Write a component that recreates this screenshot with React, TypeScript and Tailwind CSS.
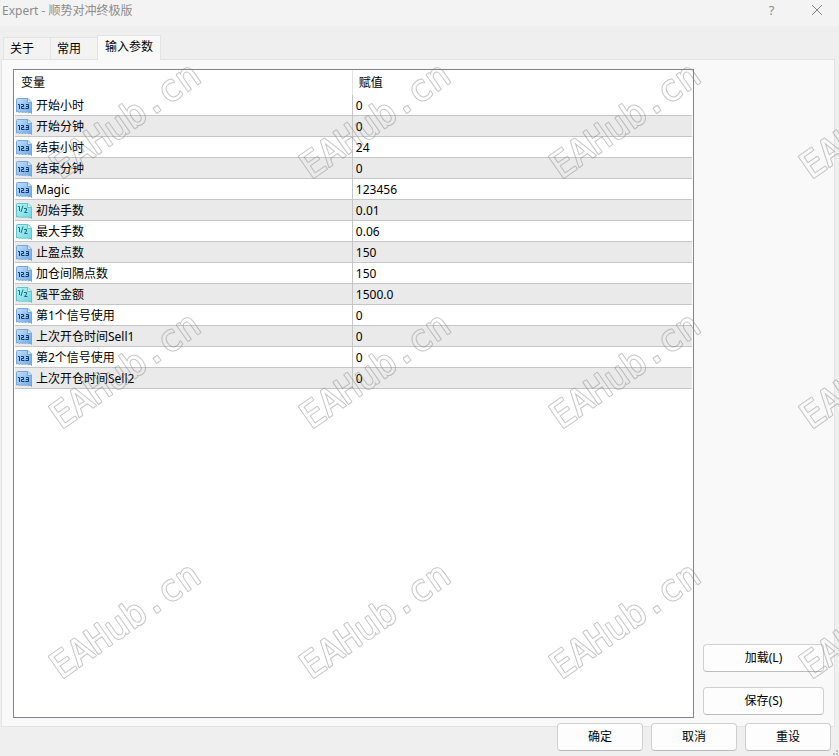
import { useState } from "react";
import clsx from "clsx";

type ParamKind = "int" | "double";

type Param = {
  name: string;
  value: string;
  kind: ParamKind;
};

const TABS = ["关于", "常用", "输入参数"];

const PARAMS: Param[] = [
  { name: "开始小时", value: "0", kind: "int" },
  { name: "开始分钟", value: "0", kind: "int" },
  { name: "结束小时", value: "24", kind: "int" },
  { name: "结束分钟", value: "0", kind: "int" },
  { name: "Magic", value: "123456", kind: "int" },
  { name: "初始手数", value: "0.01", kind: "double" },
  { name: "最大手数", value: "0.06", kind: "double" },
  { name: "止盈点数", value: "150", kind: "int" },
  { name: "加仓间隔点数", value: "150", kind: "int" },
  { name: "强平金额", value: "1500.0", kind: "double" },
  { name: "第1个信号使用", value: "0", kind: "int" },
  { name: "上次开仓时间Sell1", value: "0", kind: "int" },
  { name: "第2个信号使用", value: "0", kind: "int" },
  { name: "上次开仓时间Sell2", value: "0", kind: "int" },
];

function KindIcon({ kind }: { kind: ParamKind }) {
  const isInt = kind === "int";
  const ink = isInt ? "#0f3a6e" : "#137085";
  const edge = isInt ? "#74a7da" : "#5fc3cc";
  return (
    <svg viewBox="0 0 16 16" className="size-4 shrink-0" aria-hidden="true">
      <path
        d="M.5 1.500q0-1 1-1H12l3.500 3.500v11.500L14 14l-1.500 1L11 13.500l-1.500 1.500L8 13.500l-1.500 1.500L5 13.500l-1.500 1L2 13.500.5 14z"
        fill={isInt ? "url(#paper-int)" : "url(#paper-double)"}
        stroke={edge}
      />
      <path d="M11.500.5V4.500h4" fill={isInt ? "#d3e8fb" : "#d5f9fa"} stroke={edge} />
      {isInt ? (
        <path
          d="M2 6.500h1.500V11M5 6.500h2.500v2h-2v2H8.500M10 6.500h2.500v4h-3M10 8.500h2.500"
          fill="none"
          stroke={ink}
        />
      ) : (
        <path
          d="M2 3.500h1.500V8M7 2.500L5 9M8 5.500h2.500v1.500L8.500 9.500H11.500"
          fill="none"
          stroke={ink}
        />
      )}
    </svg>
  );
}

function IconPaints() {
  return (
    <svg className="absolute size-0" aria-hidden="true">
      <defs>
        <linearGradient id="paper-int" x1="0" y1="0" x2="1" y2="1">
          <stop offset="0" stopColor="#c2dffb" />
          <stop offset="1" stopColor="#6ea8e2" />
        </linearGradient>
        <linearGradient id="paper-double" x1="0" y1="0" x2="1" y2="1">
          <stop offset="0" stopColor="#b5f3f6" />
          <stop offset="1" stopColor="#72d6df" />
        </linearGradient>
      </defs>
    </svg>
  );
}

function Watermark() {
  const text = {
    x: 61,
    y: 180,
    fontSize: 36,
    transform: "rotate(-35 61 180)",
    strokeLinejoin: "round" as const,
  };
  return (
    <svg
      className="pointer-events-none absolute inset-0 size-full font-['DejaVu_Sans_Mono',monospace]"
      aria-hidden="true"
    >
      <defs>
        {/* the letter bodies are cut out so that only the contour stays */}
        <mask id="mark-cut" maskUnits="userSpaceOnUse" x="0" y="0" width="250" height="250">
          <rect width="250" height="250" fill="#fff" />
          <text {...text} fill="#000">
            EAHub.cn
          </text>
        </mask>
        <pattern id="mark" width="250" height="250" patternUnits="userSpaceOnUse">
          <g mask="url(#mark-cut)">
            <text {...text} fill="#808080" stroke="#808080" strokeWidth="2">
              EAHub.cn
            </text>
          </g>
        </pattern>
      </defs>
      <rect width="100%" height="100%" fill="url(#mark)" opacity="0.45" />
    </svg>
  );
}

function DialogButton({ children, className }: { children: string; className?: string }) {
  return (
    <button
      type="button"
      className={clsx(
        "h-7 rounded border border-[#d0d0d0] border-b-[#bcbcbc] bg-[#fdfdfd] text-center hover:bg-[#e8f2fb]",
        className,
      )}
    >
      {children}
    </button>
  );
}

export default function App() {
  const [tab, setTab] = useState("输入参数");

  return (
    <main className="relative flex min-h-screen flex-col overflow-hidden bg-[#efefef] font-['Noto_Sans','Noto_Sans_CJK_SC',sans-serif] text-xs text-black">
      <IconPaints />

      {/* Title bar */}
      <header className="flex h-[26px] items-start justify-between bg-[#f3f3f3] pl-0.5 text-[#8c8c8c]">
        <h1 className="leading-[22px]">Expert - 顺势对冲终极版</h1>
        <div className="flex">
          <button type="button" aria-label="帮助" className="h-5 w-[45px] text-[13px] leading-5">
            ?
          </button>
          <button type="button" aria-label="关闭" className="flex h-5 w-[45px] items-center justify-center">
            <svg viewBox="0 0 12 12" className="size-3" fill="none" stroke="#858585">
              <path d="M1 1l10 10M11 1L1 11" />
            </svg>
          </button>
        </div>
      </header>

      {/* Tabs */}
      <div role="tablist" className="relative z-10 flex items-end pt-[9px] pl-[3px]">
        {TABS.map((t) => (
          <button
            key={t}
            type="button"
            role="tab"
            aria-selected={t === tab}
            onClick={() => setTab(t)}
            className={clsx(
              "border border-b-0 border-[#e3e3e3]",
              t === tab
                ? "-mb-px h-[25px] bg-[#f9f9f9] px-[7px] pb-0.5"
                : "h-[22px] border-r-0 bg-[#f3f3f3] pr-4 pl-[6px]",
            )}
          >
            {t}
          </button>
        ))}
      </div>

      {/* Panel */}
      <section className="mr-1 ml-px flex flex-1 gap-[9px] border border-[#e3e3e3] bg-[#f9f9f9] pt-[9px] pr-[10px] pb-2 pl-[11px]">
        <div className="flex-1 border border-[#83838f] bg-white px-px">
          <table className="w-full table-fixed border-separate border-spacing-0">
            <thead>
              <tr className="h-[25px] text-left">
                <th className="w-[49.9%] border-r border-[#e3e3e3] p-0 pl-[6px] font-normal">变量</th>
                <th className="p-0 pl-[6px] font-normal">赋值</th>
              </tr>
            </thead>
            <tbody>
              {PARAMS.map((p) => (
                <tr key={p.name} className="even:bg-[#eaeaea]">
                  <td className="border-r border-b border-[#c6c6c6] p-0 pl-px">
                    <div className="flex h-5 items-center gap-1 pt-0.5">
                      <KindIcon kind={p.kind} />
                      <span className="leading-4">{p.name}</span>
                    </div>
                  </td>
                  <td className="border-b border-[#c6c6c6] p-0 pt-0.5 pl-[3px] leading-[18px]">{p.value}</td>
                </tr>
              ))}
            </tbody>
          </table>
        </div>

        <div className="flex w-[121px] flex-col justify-end gap-[15px] pb-[3px]">
          <DialogButton>加载(L)</DialogButton>
          <DialogButton>保存(S)</DialogButton>
        </div>
      </section>

      {/* Footer buttons overlap the panel's lower edge */}
      <footer className="relative -mt-1 flex justify-end gap-2 pr-2 pb-[5px]">
        <DialogButton className="w-[86px]">确定</DialogButton>
        <DialogButton className="w-[86px]">取消</DialogButton>
        <DialogButton className="w-[86px]">重设</DialogButton>
        <svg
          viewBox="0 0 6 6"
          className="absolute right-0 bottom-0 size-[6px]"
          fill="#bdbdbd"
          aria-hidden="true"
        >
          <path d="M3 0h2v2H3zM0 3h2v2H0zM3 3h2v2H3z" />
        </svg>
      </footer>

      <Watermark />
    </main>
  );
}
